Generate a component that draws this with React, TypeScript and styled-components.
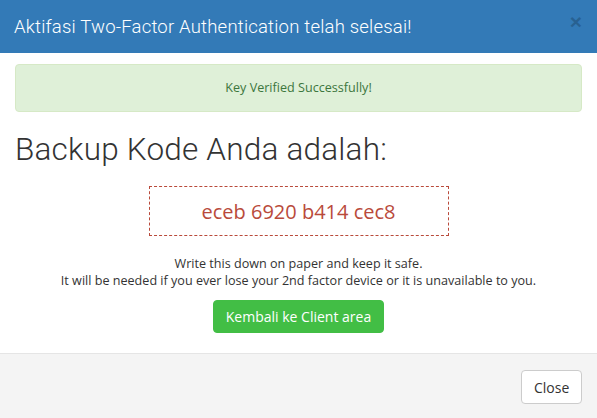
import styled, { createGlobalStyle } from 'styled-components';

const GlobalStyle = createGlobalStyle`
	html, body {
		margin: 0;
		padding: 0;
		background: #fff;
	}
	body {
		font-family: 'Open Sans', 'Liberation Sans', sans-serif;
		font-size: 12.6px;
		color: #333;
	}
	* {
		box-sizing: border-box;
	}
`;

const BACKUP_CODE = 'eceb 6920 b414 cec8';

export default function App() {
	return (
		<>
			<GlobalStyle />
			<Modal>
				<Header>
					<Title>Aktifasi Two-Factor Authentication telah selesai!</Title>
					<CloseX type="button" aria-label="Close">
						×
					</CloseX>
				</Header>
				<Body>
					<Alert>Key Verified Successfully!</Alert>
					<Heading>Backup Kode Anda adalah:</Heading>
					<CodeBox>{BACKUP_CODE}</CodeBox>
					<Note>
						Write this down on paper and keep it safe.
						<br />
						It will be needed if you ever lose your 2nd factor device or it is unavailable to you.
					</Note>
					<Center>
						<SuccessBtn type="button">Kembali ke Client area</SuccessBtn>
					</Center>
				</Body>
				<Footer>
					<DefaultBtn type="button">Close</DefaultBtn>
				</Footer>
			</Modal>
		</>
	);
}

const Modal = styled.div`
	display: flex;
	flex-direction: column;
	width: 597px;
	height: 418px;
	background: #fff;
`;

const Header = styled.div`
	flex-shrink: 0;
	display: flex;
	align-items: center;
	justify-content: space-between;
	height: 53px;
	padding: 0 15px 0 14px;
	background: #337ab7;
`;

const Title = styled.h4`
	margin: 0;
	font-family: Roboto, Lato, sans-serif;
	font-weight: 300;
	font-size: 18.5px;
	letter-spacing: 0.2px;
	color: #fff;
`;

const CloseX = styled.button`
	border: 0;
	background: transparent;
	padding: 0;
	margin-top: -10px;
	font-family: 'Liberation Sans', Arial, sans-serif;
	font-size: 21px;
	font-weight: 700;
	line-height: 1;
	color: #000;
	opacity: 0.2;
	cursor: pointer;
`;

const Body = styled.div`
	flex: 1;
	padding: 11px 15px 20px;
`;

const Alert = styled.div`
	padding: 15px;
	border: 1px solid #d6e9c6;
	border-radius: 4px;
	background: #dff0d8;
	color: #3c763d;
	text-align: center;
	line-height: 16px;
`;

const Heading = styled.h2`
	margin: 21px 0 20px;
	font-family: Roboto, Lato, sans-serif;
	font-weight: 300;
	font-size: 31.5px;
	line-height: 33px;
	letter-spacing: 0.2px;
	color: #333;
`;

const CodeBox = styled.div`
	width: 300px;
	height: 50px;
	margin: 0 auto;
	display: flex;
	align-items: center;
	justify-content: center;
	border: 1px dashed #b94a3b;
	color: #b94a3b;
	font-size: 20px;
`;

const Note = styled.p`
	margin: 19px 0 11px;
	text-align: center;
	line-height: 17px;
	color: #333;
`;

const Center = styled.div`
	display: flex;
	justify-content: center;
`;

const Btn = styled.button`
	height: 34px;
	padding: 0 12px;
	border-radius: 4px;
	font-family: 'Open Sans', 'Liberation Sans', sans-serif;
	font-size: 14px;
	white-space: nowrap;
	cursor: pointer;
`;

const SuccessBtn = styled(Btn)`
	min-width: 171px;
	height: 33px;
	border: 1px solid #42be45;
	background: #42be45;
	color: #fff;
`;

const Footer = styled.div`
	flex-shrink: 0;
	display: flex;
	justify-content: flex-end;
	padding: 16px 15px 15px;
	border-top: 1px solid #e5e5e5;
	background: #f4f4f4;
`;

const DefaultBtn = styled(Btn)`
	width: 61px;
	border: 1px solid #ccc;
	background: #fff;
	color: #333;
`;
